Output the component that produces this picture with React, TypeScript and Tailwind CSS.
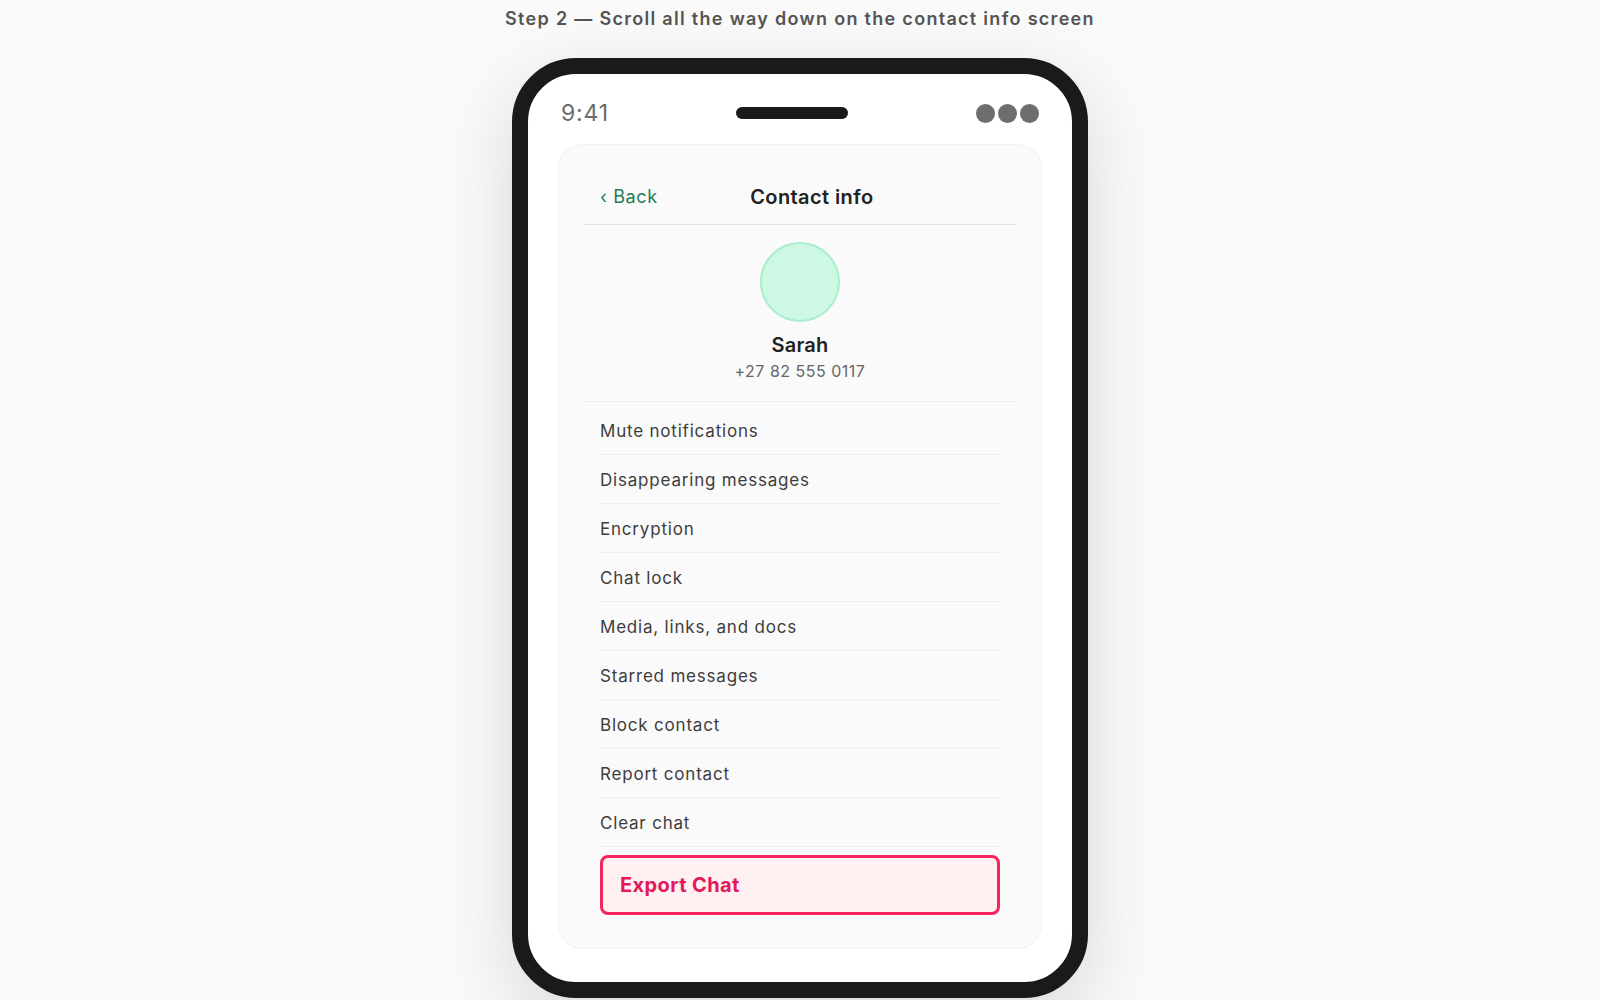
const items = [
  "Mute notifications",
  "Disappearing messages",
  "Encryption",
  "Chat lock",
  "Media, links, and docs",
  "Starred messages",
  "Block contact",
  "Report contact",
  "Clear chat",
];

function StatusBar() {
  return (
    <div className="flex items-center justify-between h-[26px] px-[3px]">
      <span className="text-[23px] leading-[26px] text-[#6b6b6b] tracking-[0.8px]">9:41</span>
      <span className="w-[112px] h-[12px] rounded-full bg-[#1a1a1a]" />
      <div className="flex gap-[3px]">
        <span className="w-[19px] h-[19px] rounded-full bg-[#6e6e6e]" />
        <span className="w-[19px] h-[19px] rounded-full bg-[#6e6e6e]" />
        <span className="w-[19px] h-[19px] rounded-full bg-[#6e6e6e]" />
      </div>
    </div>
  );
}

export default function App() {
  return (
    <div className="min-h-screen bg-[#fafafa] flex flex-col items-center font-['Inter','Noto_Sans',sans-serif]">
      <p className="pt-[7px] text-[18px] leading-[24px] font-semibold text-[#555555] tracking-[1.3px]">
        Step 2 — Scroll all the way down on the contact info screen
      </p>

      {/* Phone frame */}
      <div className="mt-[27px] w-[576px] h-[940px] rounded-[64px] border-[16px] border-[#1a1a1a] bg-white shadow-[0_24px_80px_rgba(0,0,0,0.14)] px-[30px] pt-[26px]">
        <StatusBar />

        {/* Screen card */}
        <div className="mt-[18px] rounded-[24px] bg-[#fafafa] border border-[#f3f3f3] px-[25px] pt-[24px] pb-[33px]">
          <header className="flex items-center px-4 pt-[14px] pb-[13px] border-b border-[#e4e4e4]">
            <span className="text-[18px] leading-[28px] text-[#1f7d59] tracking-[0.6px]">‹ Back</span>
            <span className="flex-1 text-center pr-[34px] text-[20px] leading-[28px] font-semibold text-[#222222] tracking-[0.4px]">
              Contact info
            </span>
          </header>

          <div className="flex flex-col items-center pt-[17px] pb-[19px] border-b border-[#f0f0f0]">
            <div className="w-[80px] h-[80px] rounded-full bg-[#cdf9e4] border-2 border-[#a9edcc]" />
            <div className="mt-[9px] text-[20px] leading-[28px] font-semibold text-[#222222] tracking-[0.2px]">Sarah</div>
            <div className="mt-[1px] text-[16px] leading-[22px] text-[#666666] tracking-[0.5px]">
              +27 82 555 0117
            </div>
          </div>

          <ul className="mt-[4px] px-4">
            {items.map((label) => (
              <li
                key={label}
                className="pt-[13px] pb-[11px] text-[17px] leading-[24px] text-[#3d3d3d] tracking-[0.8px] border-b border-[#f0f0f0]"
              >
                {label}
              </li>
            ))}
          </ul>

          <div className="px-4 mt-[8px]">
            <button className="w-full h-[60px] flex items-center px-[17px] rounded-[8px] border-[3px] border-[#f5245a] bg-[#fff0f2] text-[20px] font-bold text-[#e2195a] tracking-[0.4px]">
              Export Chat
            </button>
          </div>
        </div>
      </div>
    </div>
  );
}
